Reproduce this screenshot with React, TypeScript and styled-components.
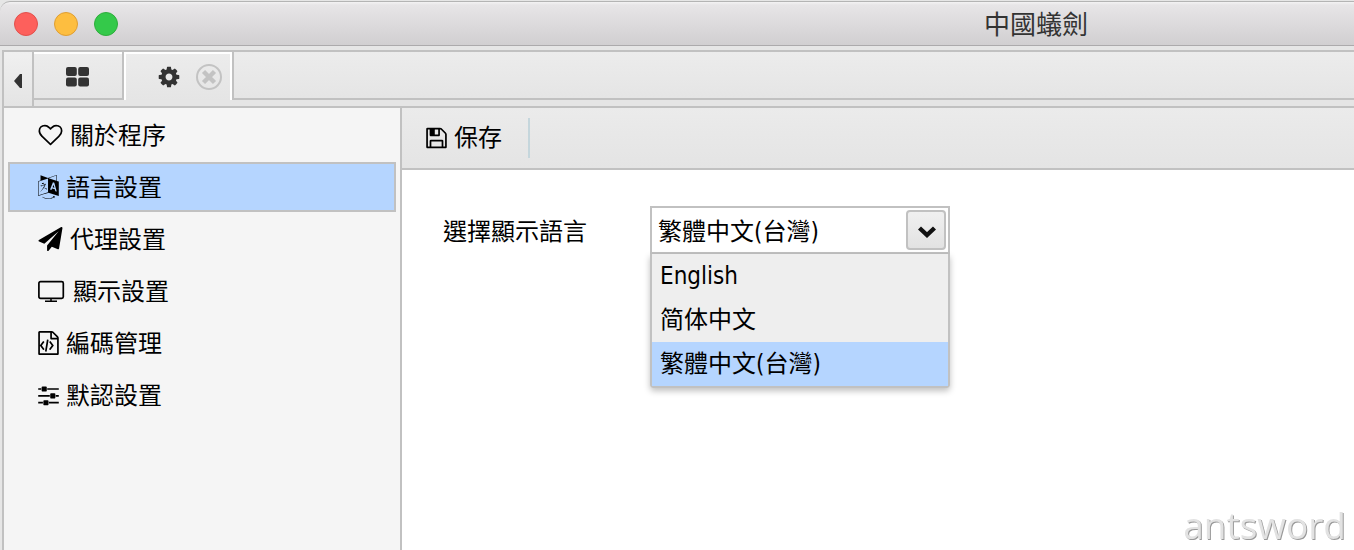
import React, { useState } from "react";
import styled, { createGlobalStyle } from "styled-components";

const LINE = "#c1c1c1";
const HIGHLIGHT = "#b5d5ff";

const GlobalStyle = createGlobalStyle`
  *, *::before, *::after { box-sizing: border-box; }
  html, body, #root { height: 100%; }
  body {
    margin: 0;
    overflow: hidden;
    background: #e6e6e6;
    color: #000;
    font-family: "DejaVu Sans Condensed", "Noto Sans CJK TC", sans-serif;
    font-size: 24px;
    line-height: 32px;
  }
  button, input { font: inherit; color: inherit; }
  svg { display: block; flex: none; }
`;

const Window = styled.div`
  display: flex;
  flex-direction: column;
  height: 100%;
  padding-top: 1px;
`;

const TitleBar = styled.header`
  display: flex;
  align-items: center;
  justify-content: space-between;
  height: 45px;
  margin-bottom: 4px;
  padding: 1px 266px 0 14px;
  border-top: 1px solid #b4b4b4;
  border-bottom: 1px solid #acaaac;
  border-top-left-radius: 10px;
  background: linear-gradient(#f4f3f4, #e7e5e7 3px, #d1cfd1);
`;

const Lights = styled.div`
  display: flex;
  gap: 16px;
`;

const Light = styled.button<{ $fill: string; $edge: string }>`
  width: 24px;
  height: 24px;
  padding: 0;
  border: 1px solid ${(p) => p.$edge};
  border-radius: 50%;
  background: ${(p) => p.$fill};
`;

const Title = styled.h1`
  margin: 0;
  padding-top: 2px;
  color: #333;
  font-size: 26px;
  font-weight: 400;
  line-height: 40px;
`;

const Frame = styled.div`
  flex: 1;
  display: flex;
  flex-direction: column;
  min-height: 0;
  margin-left: 2px;
  border-top: 2px solid ${LINE};
  border-left: 2px solid ${LINE};
`;

const TabBar = styled.div`
  display: flex;
  height: 56px;
  border-bottom: 2px solid ${LINE};
  background: #e5e5e5;
`;

const Scroller = styled.button`
  display: flex;
  align-items: center;
  justify-content: center;
  width: 30px;
  padding: 4px 0 0;
  border: 0;
  border-right: 2px solid ${LINE};
  background: linear-gradient(#f0f0f0, #e4e4e4);
`;

const Tab = styled.div<{ $active?: boolean }>`
  display: flex;
  align-items: center;
  justify-content: center;
  gap: 15px;
  width: ${(p) => (p.$active ? 108 : 90)}px;
  height: 48px;
  box-shadow: inset 0 2px #fff;
  border-right: 2px solid ${(p) => (p.$active ? "#fff" : LINE)};
  border-bottom: ${(p) => (p.$active ? "0" : `2px solid ${LINE}`)};
  border-left: ${(p) => (p.$active ? "2px solid #fff" : "0")};
  padding: ${(p) => (p.$active ? "2px 8px 0 30px" : "4px 0 0")};
  background: linear-gradient(#ececec, #e5e5e5);
`;

const PlainButton = styled.button`
  display: flex;
  padding: 0;
  border: 0;
  background: none;
`;

const TabRest = styled.div`
  flex: 1;
  height: 48px;
  border-left: 2px solid ${LINE};
  border-bottom: 2px solid ${LINE};
  background: linear-gradient(#ececec, #e5e5e5);
`;

const Body = styled.div`
  flex: 1;
  display: flex;
  min-height: 0;
`;

const Sidebar = styled.nav`
  display: flex;
  flex-direction: column;
  gap: 2px;
  width: 398px;
  padding: 2px 4px;
  border-right: 2px solid ${LINE};
  background: #f5f5f5;
`;

const NavItem = styled.a<{ $active: boolean }>`
  display: flex;
  align-items: center;
  gap: 7px;
  height: 50px;
  padding-left: 28px;
  border: 2px solid ${(p) => (p.$active ? LINE : "transparent")};
  background: ${(p) => (p.$active ? HIGHLIGHT : "transparent")};
  color: #000;
  text-decoration: none;
`;

const NavText = styled.span`
  padding-top: 2px;
`;

const Main = styled.main`
  flex: 1;
  display: flex;
  flex-direction: column;
  min-width: 0;
  background: #fff;
`;

const Toolbar = styled.div`
  display: flex;
  align-items: center;
  height: 62px;
  padding-left: 24px;
  border-bottom: 2px solid ${LINE};
  background: linear-gradient(#ebebeb, #e4e4e4);
`;

const ToolButton = styled.button`
  display: flex;
  align-items: center;
  gap: 7px;
  padding: 0 26px 0 0;
  border: 0;
  background: none;
`;

const Divider = styled.span`
  width: 2px;
  height: 40px;
  background: #c5d6dc;
`;

const Form = styled.form`
  display: flex;
  align-items: center;
  padding: 36px 41px;
`;

const Label = styled.label`
  width: 207px;
  padding-top: 4px;
`;

const Combo = styled.div`
  position: relative;
  width: 300px;
`;

const ComboBox = styled.div`
  display: flex;
  align-items: center;
  height: 48px;
  padding: 0 2px 0 6px;
  border: 2px solid ${LINE};
  background: #fff;
`;

const ComboInput = styled.input`
  flex: 1;
  min-width: 0;
  height: 40px;
  padding: 0 0 2px;
  border: 0;
  outline: 0;
  background: none;
`;

const ComboArrow = styled.button`
  display: flex;
  align-items: center;
  justify-content: center;
  width: 40px;
  height: 40px;
  padding: 4px 0 0 2px;
  border: 2px solid ${LINE};
  border-radius: 4px;
  background: linear-gradient(#f0f0f0, #e2e2e2);
`;

const Options = styled.ul`
  position: absolute;
  top: 100%;
  left: 0;
  width: 100%;
  margin: 0;
  padding: 0;
  list-style: none;
  border: 2px solid ${LINE};
  border-top: 0;
  border-radius: 0 0 4px 4px;
  background: #eee;
  box-shadow: 0 3px 6px rgba(0, 0, 0, 0.25);
`;

const Option = styled.li<{ $active: boolean }>`
  height: 44px;
  padding-left: 8px;
  line-height: 44px;
  background: ${(p) => (p.$active ? HIGHLIGHT : "transparent")};
`;

const Watermark = styled.div`
  position: fixed;
  right: 8px;
  bottom: 0;
  color: #e2e2e2;
  font-family: "Open Sans", sans-serif;
  font-size: 37px;
  line-height: 50px;
  text-shadow: 1px 1px 0 #999;
`;

type GlyphProps = { d: string; x?: number; units?: number; width?: number; fill?: string };

const Glyph = ({ d, x = 0, units = 1792, width = 24, fill = "#000" }: GlyphProps) => (
  <svg width={width} height="24" viewBox={`${x} 0 ${units} 1792`} fill={fill} aria-hidden="true">
    <path d={d} />
  </svg>
);

const HEART =
  "M1664 596q0-81-21.5-143t-55-98.5-81.5-59.5-94-31-98-8-112 25.5-110.5 64-86.5 72-60 61.5q-18 22-49 22t-49-22q-24-28-60-61.5t-86.5-72-110.5-64-112-25.5-98 8-94 31-81.5 59.5-55 98.5-21.5 143q0 168 187 355l581 560 580-559q188-188 188-356zm128 0q0 221-229 450l-623 600q-18 18-44 18t-44-18l-624-602q-10-8-27.5-26t-55.5-65.5-68-97.5-53.5-121-23.5-138q0-220 127-344t351-124q62 0 126.5 21.5t120 58 95.5 68.5 76 68q36-36 76-68t95.5-68.5 120-58 126.5-21.5q224 0 351 124t127 344z";
const LANGUAGE =
  "M782 1078q-1 3-12.5-.5t-31.5-11.5l-20-9q-44-20-87-49-7-5-41-31.5t-38-28.5q-67 103-134 181-81 95-105 110-4 2-19.5 4t-18.5 0q6-4 82-92 21-24 85.5-115t78.5-118q17-30 51-98.5t36-77.5q-8-1-110 33-8 2-27.5 7.5t-34.5 9.5-17 5q-2 2-2 10.5t-1 9.5q-5 10-31 15-23 7-47 0-18-4-28-21-4-6-5-23 6-2 24.5-5t29.5-6q58-16 105-32 100-35 102-35 10-2 43-19.5t44-21.5q9-3 21.5-8t14.5-5.5 6 .5q2 12-1 33 0 2-12.5 27t-26.5 53.5-17 33.5q-25 50-77 131l64 28q12 6 74.5 32t67.5 28q4 1 10.5 25.5t4.5 30.5zm-205-486q3 15-4 28-12 23-50 38-30 12-60 12-26-3-49-26-14-15-18-41l1-3q3 3 19.5 5t26.5 0 58-16q36-12 55-14 17 0 21 17zm698 129l63 227-139-42zm-1108 800l694-232v-1032l-694 233v1031zm1241-317l102 31-181-657-100-31-216 536 102 31 45-110 211 65zm-503-962l573 184v-380zm311 1323l158 13-54 160-40-66q-130 83-276 108-58 12-91 12h-84q-79 0-199.5-39t-183.5-85q-8-7-8-16 0-8 5-13.5t13-5.5q4 0 18 7.5t30.5 16.5 20.5 11q73 37 159.5 61.5t157.5 24.5q95 0 167-14.5t157-50.5q15-7 30.5-15.5t34-19 28.5-16.5zm448-1079v1079l-774-246q-14 6-375 127.5t-368 121.5q-13 0-18-13 0-1-1-3v-1078q3-9 4-10 5-6 20-11 107-36 149-50v-384l558 198q2 0 160.5-55t316-108.5 161.5-53.5q20 0 20 21v418z";
const PLANE =
  "M1764 11q33 24 27 64l-256 1536q-5 29-32 45-14 8-31 8-11 0-24-5l-453-185-242 295q-18 23-49 23-13 0-22-4-19-7-30.5-23.5t-11.5-36.5v-349l864-1059-1069 925-395-162q-37-14-40-55-2-40 32-59l1664-960q15-9 32-9 20 0 36 11z";
const FILE_CODE =
  "M1596 380q28 28 48 76t20 88v1152q0 40-28 68t-68 28h-1344q-40 0-68-28t-28-68v-1600q0-40 28-68t68-28h896q40 0 88 20t76 48zm-444-244v376h376q-10-29-22-41l-313-313q-12-12-41-22zm384 1528v-1024h-416q-40 0-68-28t-28-68v-416h-768v1536h1280zM480 768q8-11 21-12.5t24 6.5l51 38q11 8 12.5 21t-6.5 24l-182 243 182 243q8 11 6.5 24t-12.5 21l-51 38q-11 8-24 6.5t-21-12.5l-226-301q-14-19 0-38zm802 301q14 19 0 38l-226 301q-8 11-21 12.5t-24-6.5l-51-38q-11-8-12.5-21t6.5-24l182-243-182-243q-8-11-6.5-24t12.5-21l51-38q11-8 24-6.5t21 12.5zm-620 461q-13-2-20.5-13t-5.5-24l138-831q2-13 13-20.5t24-5.5l63 10q13 2 20.5 13t5.5 24l-138 831q-2 13-13 20.5t-24 5.5z";
const SLIDERS =
  "M480 1408v128h-352v-128h352zm352-128q26 0 45 19t19 45v256q0 26-19 45t-45 19h-256q-26 0-45-19t-19-45v-256q0-26 19-45t45-19h256zm160-384v128h-864v-128h864zm-640-512v128h-224v-128h224zm1312 1024v128h-736v-128h736zm-960-1152q26 0 45 19t19 45v256q0 26-19 45t-45 19h-256q-26 0-45-19t-19-45v-256q0-26 19-45t45-19h256zm640 512q26 0 45 19t19 45v256q0 26-19 45t-45 19h-256q-26 0-45-19t-19-45v-256q0-26 19-45t45-19h256zm320 128v128h-224v-128h224zm0-512v128h-864v-128h864z";
const FLOPPY =
  "M512 1536h768v-384h-768v384zm896 0h128v-896q0-14-10-38.5t-20-34.5l-281-281q-10-10-34-20t-39-10v416q0 40-28 68t-68 28h-576q-40 0-68-28t-28-68v-416h-128v1280h128v-416q0-40 28-68t68-28h832q40 0 68 28t28 68v416zm-384-928v-320q0-13-9.5-22.5t-22.5-9.5h-192q-13 0-22.5 9.5t-9.5 22.5v320q0 13 9.5 22.5t22.5 9.5h192q13 0 22.5-9.5t9.5-22.5zm640 32v928q0 40-28 68t-68 28h-1344q-40 0-68-28t-28-68v-1344q0-40 28-68t68-28h928q40 0 88 20t76 48l280 280q28 28 48 76t20 88z";
const COG =
  "M1152 896q0-106-75-181t-181-75-181 75-75 181 75 181 181 75 181-75 75-181zm512-109v222q0 12-8 23t-20 13l-185 28q-19 54-39 91 35 50 107 138 10 12 10 25t-9 23q-27 37-99 108t-94 71q-12 0-26-9l-138-108q-44 23-91 38-16 136-29 186-7 28-36 28h-222q-14 0-24.5-8.5t-11.5-21.5l-28-184q-49-16-90-37l-141 107q-10 9-25 9-14 0-25-11-126-114-165-168-7-10-7-23 0-12 8-23 15-21 51-66.5t54-70.5q-27-50-41-99l-183-27q-13-2-21-12.5t-8-23.5v-222q0-12 8-23t19-13l186-28q14-46 39-92-40-57-107-138-10-12-10-24 0-10 9-23 26-36 98.5-107.5t94.5-71.5q13 0 26 10l138 107q44-23 91-38 16-136 29-186 7-28 36-28h222q14 0 24.5 8.5t11.5 21.5l28 184q49 16 90 37l142-107q9-9 24-9 13 0 25 10 129 119 165 170 7 8 7 22 0 12-8 23-15 21-51 66.5t-54 70.5q26 50 41 98l183 28q13 2 21 12.5t8 23.5z";

const Monitor = () => (
  <svg width="28" height="24" viewBox="0 0 28 24" fill="none" stroke="#000" aria-hidden="true">
    <rect x="0.9" y="2.7" width="24.4" height="16.6" rx="1.6" strokeWidth="1.7" />
    <path d="M13 19v3M7 22.3h12" strokeWidth="1.5" />
  </svg>
);

const Grid = () => (
  <svg width="24" height="20" viewBox="0 0 24 20" fill="#333" aria-hidden="true">
    <rect x="0" y="0" width="10.8" height="9" rx="2" />
    <rect x="12.2" y="0" width="10.8" height="9" rx="2" />
    <rect x="0" y="10.4" width="10.8" height="9" rx="2" />
    <rect x="12.2" y="10.4" width="10.8" height="9" rx="2" />
  </svg>
);

const Close = () => (
  <svg width="26" height="26" viewBox="0 0 26 26" fill="none" stroke="#c3c3c3" aria-hidden="true">
    <circle cx="13" cy="13" r="12" strokeWidth="2" />
    <path d="M7.5 7.5L18.5 18.5M18.5 7.5L7.5 18.5" strokeWidth="4.4" />
  </svg>
);

const NAV = [
  { id: "about", text: "關於程序", icon: <Glyph d={HEART} width={25} /> },
  { id: "language", text: "語言設置", icon: <Glyph d={LANGUAGE} x={128} units={1536} width={21} /> },
  { id: "proxy", text: "代理設置", icon: <Glyph d={PLANE} width={25} /> },
  { id: "display", text: "顯示設置", icon: <Monitor /> },
  { id: "encoders", text: "編碼管理", icon: <Glyph d={FILE_CODE} x={128} units={1536} width={21} /> },
  { id: "defaults", text: "默認設置", icon: <Glyph d={SLIDERS} x={128} units={1536} width={21} /> },
];

const LANGUAGES = ["English", "简体中文", "繁體中文(台灣)"];

export default function App() {
  const [section, setSection] = useState("language");
  const [language, setLanguage] = useState(LANGUAGES[2]);
  const [open, setOpen] = useState(true);

  return (
    <Window>
      <GlobalStyle />
      <TitleBar>
        <Lights>
          <Light aria-label="Close" $fill="#fd605c" $edge="#e2504c" />
          <Light aria-label="Minimize" $fill="#fdbe40" $edge="#df9e33" />
          <Light aria-label="Zoom" $fill="#34c94a" $edge="#2ead3c" />
        </Lights>
        <Title>中國蟻劍</Title>
      </TitleBar>
      <Frame>
        <TabBar>
          <Scroller aria-label="Scroll tabs">
            <svg width="8" height="14" viewBox="0 0 8 14" fill="#333" aria-hidden="true">
              <path d="M0 7L6 0H8V14H6Z" />
            </svg>
          </Scroller>
          <Tab>
            <PlainButton aria-label="Home">
              <Grid />
            </PlainButton>
          </Tab>
          <Tab $active>
            <PlainButton aria-label="Settings">
              <Glyph d={COG} fill="#333" />
            </PlainButton>
            <PlainButton aria-label="Close tab">
              <Close />
            </PlainButton>
          </Tab>
          <TabRest />
        </TabBar>
        <Body>
          <Sidebar>
            {NAV.map((item) => (
              <NavItem
                key={item.id}
                href={`#${item.id}`}
                $active={item.id === section}
                onClick={() => setSection(item.id)}
              >
                {item.icon}
                <NavText>{item.text}</NavText>
              </NavItem>
            ))}
          </Sidebar>
          <Main>
            <Toolbar>
              <ToolButton>
                <Glyph d={FLOPPY} x={128} units={1536} width={21} />
                保存
              </ToolButton>
              <Divider />
            </Toolbar>
            <Form>
              <Label htmlFor="display-language">選擇顯示語言</Label>
              <Combo>
                <ComboBox>
                  <ComboInput
                    id="display-language"
                    role="combobox"
                    aria-expanded={open}
                    aria-controls="language-options"
                    value={language}
                    readOnly
                  />
                  <ComboArrow type="button" aria-label="Show languages" onClick={() => setOpen(!open)}>
                    <svg width="18" height="12" viewBox="0 0 18 12" fill="none" stroke="#111" aria-hidden="true">
                      <path d="M1.5 2L9 9L16.5 2" strokeWidth="4.4" />
                    </svg>
                  </ComboArrow>
                </ComboBox>
                {open && (
                  <Options id="language-options" role="listbox">
                    {LANGUAGES.map((name) => (
                      <Option
                        key={name}
                        role="option"
                        aria-selected={name === language}
                        $active={name === language}
                        onClick={() => {
                          setLanguage(name);
                          setOpen(false);
                        }}
                      >
                        {name}
                      </Option>
                    ))}
                  </Options>
                )}
              </Combo>
            </Form>
          </Main>
        </Body>
      </Frame>
      <Watermark>antsword</Watermark>
    </Window>
  );
}
